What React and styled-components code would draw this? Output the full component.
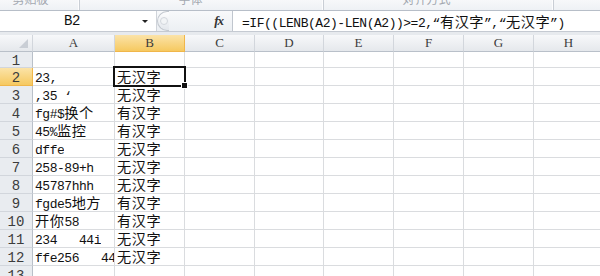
import styled, { createGlobalStyle } from 'styled-components';

const GlobalStyle = createGlobalStyle`
  html, body { margin: 0; padding: 0; background: #fff; }
  body { font-family: "Liberation Sans", Arial, sans-serif; }
`;

const COLS = ['A', 'B', 'C', 'D', 'E', 'F', 'G', 'H'];
const WIDTHS = '33px 82px 70px 70px 69px 70px 70px 70px 70px';

const ROWS = [
  ['', ''],
  ['23,', '无汉字'],
  [',35 ‘', '无汉字'],
  ['fg#$换个', '有汉字'],
  ['45%监控', '有汉字'],
  ['dffe', '无汉字'],
  ['258-89+h', '无汉字'],
  ['45787hhh', '无汉字'],
  ['fgde5地方', '有汉字'],
  ['开你58', '有汉字'],
  ['234   44i', '无汉字'],
  ['ffe256   44', '无汉字'],
  ['', ''],
];

const FORMULA = '=IF((LENB(A2)-LEN(A2))>=2,“有汉字”,“无汉字”)';

const Page = styled.div`
  width: 600px;
  height: 276px;
  overflow: hidden;
  display: flex;
  flex-direction: column;
  background: #fff;
`;

const Ribbon = styled.div`
  height: 10px;
  flex: none;
  display: grid;
  grid-template-columns: 80px 244px 230px 1fr;
  background: linear-gradient(#f7f8fa, #eef1f5);
  border-bottom: 1px solid #b7bec8;
  overflow: hidden;
`;

const RibbonGroup = styled.div`
  display: flex;
  justify-content: center;
  border-right: 1px solid #c9ced5;
  box-shadow: inset -1px 0 0 #fdfdfe;
  padding-right: ${({ $shift }) => $shift || 0}px;
`;

const RibbonLabel = styled.span`
  margin-top: -8px;
  font-family: "Noto Sans CJK SC", sans-serif;
  font-size: 12px;
  line-height: 14px;
  color: #a3a8b0;
`;

const FormulaBar = styled.div`
  height: 20px;
  flex: none;
  display: flex;
  background: #fff;
  border-bottom: 1px solid #c5cad2;
`;

const NameBox = styled.div`
  width: 156px;
  flex: none;
  display: flex;
  align-items: center;
  border-right: 1px solid #d0d4da;
`;

const NameText = styled.span`
  flex: 1;
  text-align: center;
  font-family: "Liberation Mono", monospace;
  font-size: 14px;
  letter-spacing: -0.5px;
  color: #111;
  padding-left: 2px;
`;

const DropArrow = styled.span`
  width: 0;
  height: 0;
  margin-right: 8px;
  border-left: 3px solid transparent;
  border-right: 3px solid transparent;
  border-top: 3px solid #222;
`;

const ButtonZone = styled.div`
  width: 75px;
  flex: none;
  display: flex;
  align-items: center;
  justify-content: space-between;
  background: linear-gradient(#f8f9fb, #eceff3);
  border-right: 1px solid #c0c6ce;
`;

const Splitter = styled.div`
  width: 11px;
  height: 18px;
  border: 1px solid #c3c8cf;
  border-right: none;
  border-radius: 10px 0 0 10px;
  background: linear-gradient(#fdfdfe, #e3e7ec);
  display: flex;
  align-items: center;
  justify-content: center;
  &::after {
    content: '';
    width: 6px;
    height: 6px;
    border-radius: 50%;
    background: #f2f4f6;
    border: 1px solid #d3d7dd;
  }
`;

const Fx = styled.span`
  margin-right: 9px;
  font-family: "Liberation Serif", serif;
  font-style: italic;
  font-weight: bold;
  font-size: 13px;
  color: #333;
  letter-spacing: -1px;
`;

const FormulaInput = styled.div`
  flex: 1;
  display: flex;
  align-items: center;
  padding-left: 9px;
  white-space: pre;
`;

const Gap = styled.div`
  height: 3px;
  flex: none;
  background: #e7eaee;
`;

const Sheet = styled.div`
  flex: 1;
  display: grid;
  grid-template-columns: ${WIDTHS};
  grid-template-rows: 17px 16px;
  grid-auto-rows: 18px;
  overflow: hidden;
`;

const HeaderCell = styled.div`
  display: flex;
  align-items: center;
  justify-content: center;
  position: relative;
  font-family: "Liberation Serif", serif;
  font-size: 13px;
  color: #3c3c3c;
  border-right: 1px solid ${({ $row }) => ($row ? '#b9c0c9' : '#d2d6dc')};
  border-bottom: 1px solid ${({ $row }) => ($row ? '#d2d6dc' : '#b9c0c9')};
  background: ${({ $active, $row }) =>
    $active
      ? 'linear-gradient(#fbe3a8, #f6c960)'
      : $row
      ? '#e9ecf0'
      : 'linear-gradient(#f7f8fa, #e5e8ec)'};
  ${({ $active }) => $active && 'border-color: #f0b64a;'}
`;

const RowNum = styled(HeaderCell)`
  font-family: "Liberation Mono", monospace;
  font-size: 14px;
  padding-top: 2px;
`;

const Corner = styled(HeaderCell)`
  &::after {
    content: '';
    position: absolute;
    right: 4px;
    bottom: 3px;
    border-left: 9px solid transparent;
    border-bottom: 9px solid #c9ced5;
  }
`;

const Cell = styled.div`
  display: flex;
  align-items: flex-end;
  padding: 0 0 0 2px;
  position: relative;
  white-space: pre;
  overflow: hidden;
  border-right: 1px solid #dadcdf;
  border-bottom: 1px solid #dadcdf;
  ${({ $selected }) =>
    $selected &&
    `
    overflow: visible;
    z-index: 2;
    &::before {
      content: '';
      position: absolute;
      left: -2px;
      top: -2px;
      right: -2px;
      bottom: -2px;
      border: 2px solid #111;
    }
    &::after {
      content: '';
      position: absolute;
      right: -4px;
      bottom: -4px;
      width: 5px;
      height: 5px;
      background: #111;
      border: 1px solid #fff;
    }
  `}
`;

const Line = styled.span`
  display: block;
  height: 17px;
  line-height: 17px;
  overflow: hidden;
  white-space: pre;
`;

const Run = styled.span`
  font-family: ${({ $cjk }) =>
    $cjk ? '"Noto Sans CJK SC", sans-serif' : '"Liberation Mono", monospace'};
  font-size: ${({ $cjk }) => ($cjk ? '14.2px' : '13px')};
  letter-spacing: ${({ $cjk }) => ($cjk ? '0.5px' : '-0.47px')};
  color: #111;
`;

const CJK = /[\u3000-\u9fff\uff00-\uffef]/;

const splitRuns = (text) => {
  const runs = [];
  for (const ch of text) {
    const cjk = CJK.test(ch);
    const last = runs[runs.length - 1];
    if (last && last.cjk === cjk) last.text += ch;
    else runs.push({ cjk, text: ch });
  }
  return runs;
};

const Mixed = ({ text }) => (
  <Line>
    {splitRuns(text).map((r, i) => (
      <Run key={i} $cjk={r.cjk}>
        {r.text}
      </Run>
    ))}
  </Line>
);

const Row = ({ index, values }) => (
  <>
    <RowNum $row $active={index === 2}>
      {index}
    </RowNum>
    {COLS.map((c, i) => (
      <Cell key={c} $selected={index === 2 && c === 'B'}>
        {values[i] ? <Mixed text={values[i]} /> : null}
      </Cell>
    ))}
  </>
);

const App = () => {
  return (
    <Page>
      <GlobalStyle />
      <Ribbon>
        <RibbonGroup $shift={18}>
          <RibbonLabel>剪贴板</RibbonLabel>
        </RibbonGroup>
        <RibbonGroup $shift={22}>
          <RibbonLabel>字体</RibbonLabel>
        </RibbonGroup>
        <RibbonGroup $shift={24}>
          <RibbonLabel>对齐方式</RibbonLabel>
        </RibbonGroup>
        <div />
      </Ribbon>
      <FormulaBar>
        <NameBox>
          <NameText>B2</NameText>
          <DropArrow />
        </NameBox>
        <ButtonZone>
          <Splitter />
          <Fx>fx</Fx>
        </ButtonZone>
        <FormulaInput>
          <Mixed text={FORMULA} />
        </FormulaInput>
      </FormulaBar>
      <Gap />
      <Sheet>
        <Corner />
        {COLS.map((c) => (
          <HeaderCell key={c} $active={c === 'B'}>
            {c}
          </HeaderCell>
        ))}
        {ROWS.map((row, r) => (
          <Row key={r} index={r + 1} values={row} />
        ))}
      </Sheet>
    </Page>
  );
};

export default App;
